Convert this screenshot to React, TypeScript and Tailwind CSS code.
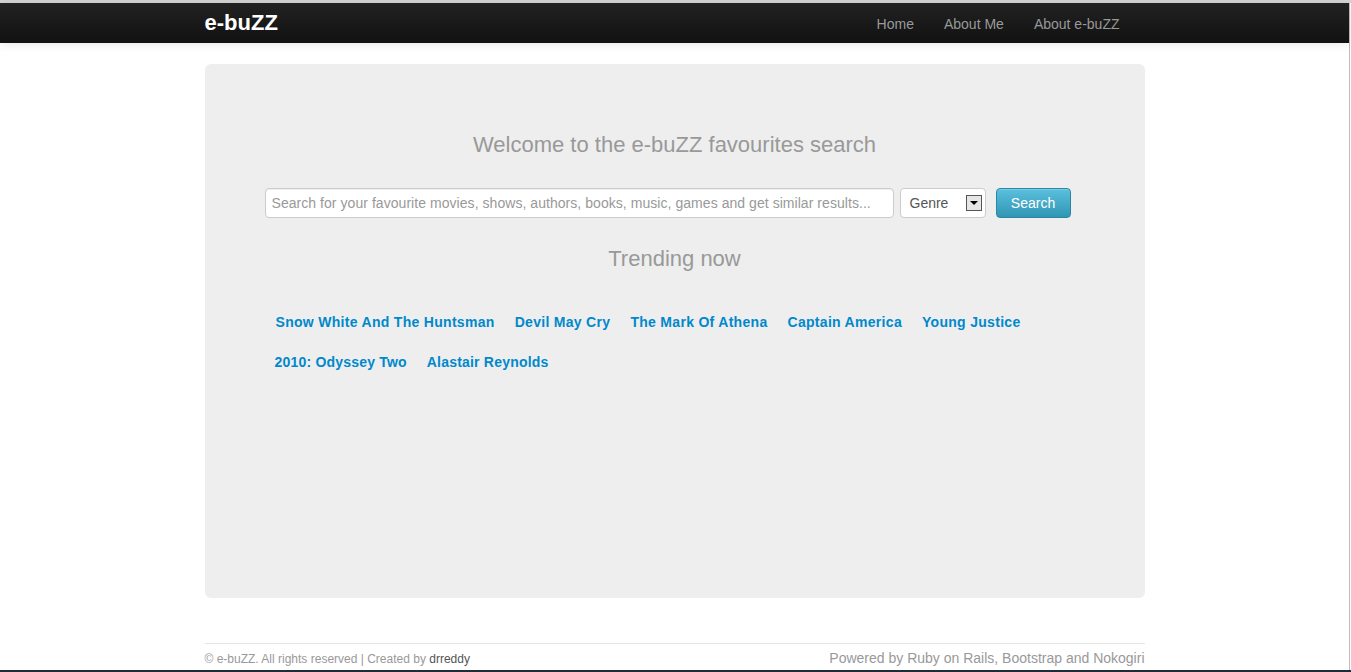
import React from "react";

const trending1 = [
  "Snow White And The Huntsman",
  "Devil May Cry",
  "The Mark Of Athena",
  "Captain America",
  "Young Justice",
];
const trending2 = ["2010: Odyssey Two", "Alastair Reynolds"];

export default function App() {
  return (
    <div
      className="w-[1351px] h-[672px] bg-white flex flex-col overflow-hidden"
      style={{ fontFamily: '"Liberation Sans", Arial, sans-serif' }}
    >
      <div className="h-[3px] bg-[#d4d4d4] shrink-0" />
      <div className="flex flex-1 min-h-0">
        <div className="flex-1 flex flex-col min-w-0">
          {/* navbar */}
          <div className="h-[40px] shrink-0 bg-gradient-to-b from-[#222222] to-[#111111] shadow-[0_1px_10px_rgba(0,0,0,0.1)] relative z-10">
            <div className="w-[940px] mx-auto flex items-center h-full">
              <span className="text-white font-bold text-[22px] leading-none">e-buZZ</span>
              <div className="ml-auto flex items-center text-[14px] text-[#999999] mr-[10px] pt-[2px]">
                <span className="px-[15px]">Home</span>
                <span className="px-[15px]">About Me</span>
                <span className="px-[15px]">About e-buZZ</span>
              </div>
            </div>
          </div>

          {/* hero */}
          <div className="w-[940px] mx-auto mt-[21px] h-[534px] bg-[#eeeeee] rounded-[6px] flex flex-col items-center">
            <h1 className="mt-[67px] text-[22px] leading-[28px] text-[#999999]">
              Welcome to the e-buZZ favourites search
            </h1>
            <div className="mt-[29px] flex items-center mr-[14px]">
              <div className="w-[629px] h-[30px] bg-white border border-[#cccccc] rounded-[4px] shadow-[inset_0_1px_1px_rgba(0,0,0,0.075)] flex items-center px-[6px] text-[14px] text-[#999999] whitespace-nowrap overflow-hidden tracking-[0.05px]">
                Search for your favourite movies, shows, authors, books, music, games and get similar results...
              </div>
              <div className="ml-[6px] w-[86px] h-[30px] bg-white border border-[#cccccc] rounded-[4px] flex items-center pl-[9px] pr-[3px] text-[14px] text-[#555555]">
                <span>Genre</span>
                <span className="ml-auto w-[16px] h-[16px] border border-[#555555] bg-[#e6e6e6] flex items-center justify-center">
                  <svg width="8" height="5" viewBox="0 0 8 5">
                    <path d="M0 0 L8 0 L4 4 Z" fill="#000" />
                  </svg>
                </span>
              </div>
              <div className="ml-[10px] w-[75px] h-[30px] rounded-[4px] bg-gradient-to-b from-[#5bc0de] to-[#2f96b4] border border-[#2a87a4] text-white text-[14px] flex items-center justify-center shadow-[inset_0_1px_0_rgba(255,255,255,0.2)]">
                Search
              </div>
            </div>
            <h2 className="mt-[27px] text-[22px] leading-[28px] text-[#999999]">Trending now</h2>
            <div className="self-stretch pl-[61px] mt-[39px] flex flex-col gap-[20px]">
              <div className="flex text-[14px] font-bold text-[#0088cc] leading-[20px] tracking-[0.3px]">
                {trending1.map((t) => (
                  <span key={t} className="mx-[10px]">{t}</span>
                ))}
              </div>
              <div className="flex text-[14px] font-bold text-[#0088cc] leading-[20px] tracking-[0.2px] -ml-px">
                {trending2.map((t) => (
                  <span key={t} className="mx-[10px]">{t}</span>
                ))}
              </div>
            </div>
          </div>

          {/* footer */}
          <div className="w-[940px] mx-auto mt-[45px] border-t border-[#e5e5e5] flex items-end justify-between h-[24px]">
            <span className="text-[12px] text-[#999999] leading-[16px]">
              © e-buZZ. All rights reserved | Created by <span className="text-[#555555]">drreddy</span>
            </span>
            <span className="text-[14px] text-[#999999] leading-[18px]">
              Powered by Ruby on Rails, Bootstrap and Nokogiri
            </span>
          </div>
        </div>
        <div className="w-[2px] shrink-0 border-l border-[#bdbdbd] bg-white" />
      </div>
      <div className="h-[2px] bg-[#1f2b36] shrink-0" />
    </div>
  );
}
